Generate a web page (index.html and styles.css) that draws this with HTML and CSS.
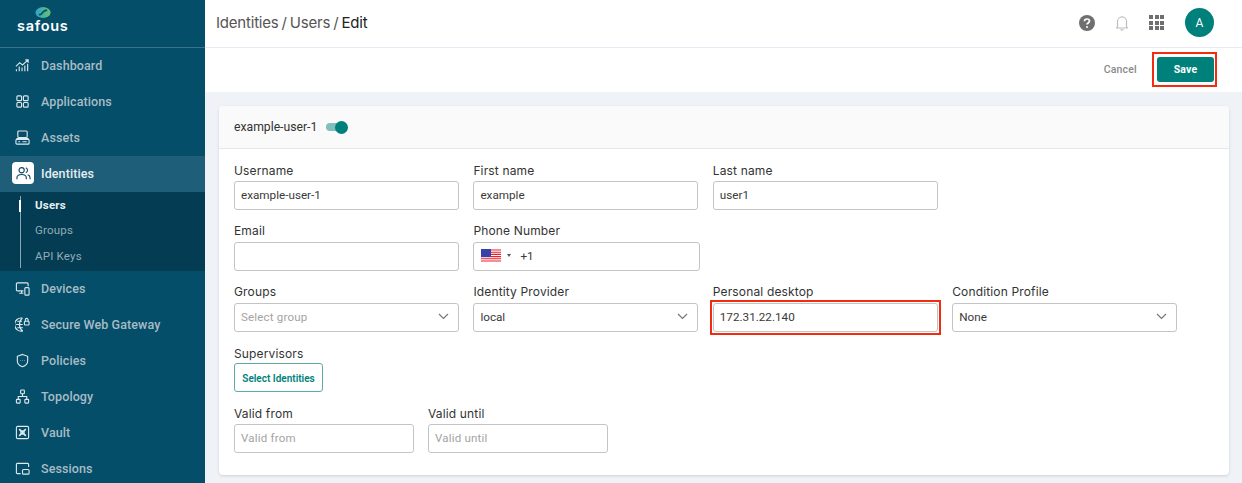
FILE: index.html
```html
<!DOCTYPE html>
<html lang="en">
<head>
  <meta charset="UTF-8" />
  <meta name="viewport" content="width=device-width, initial-scale=1" />
  <title>Identities / Users / Edit</title>
  <link rel="stylesheet" href="styles.css">
</head>
<body>
  <aside class="sidebar">
    <div class="logo">
      <svg class="logo-mark" width="16" height="11" viewBox="0 0 16 11">
        <defs>
          <linearGradient id="logoGrad" x1="0" y1="0" x2="1" y2="0">
            <stop offset="0" stop-color="#2aa3c8" />
            <stop offset="1" stop-color="#6cc070" />
          </linearGradient>
        </defs>
        <ellipse cx="8" cy="5.500" rx="7.600" ry="5.400" fill="url(#logoGrad)" />
        <path d="M4.500 7.600 C7 8 7 5.500 8 5 C9 4.500 9.500 3.200 11.500 3.400" fill="none" stroke="#04506b" stroke-width="1.600" stroke-linecap="round" />
      </svg>
      <span class="logo-text">safous</span>
    </div>
    <nav class="nav">
      <a class="nav-item">
        <svg class="nav-icon" viewBox="0 0 16 14"><path d="M1 8l4-4 3 2.500 6-5.500M11 1h3v3M1.500 13v-2M4.500 13V8M7.500 13V9M10.500 13V7M13.500 13V5" /></svg>
        <span>Dashboard</span>
      </a>
      <a class="nav-item">
        <svg class="nav-icon" viewBox="0 0 16 16"><rect x="2" y="2" width="5" height="5" rx="1" /><rect x="9" y="2" width="5" height="5" rx="1" /><rect x="2" y="9" width="5" height="5" rx="1" /><rect x="9" y="9" width="5" height="5" rx="1" /></svg>
        <span>Applications</span>
      </a>
      <a class="nav-item">
        <svg class="nav-icon" viewBox="0 0 16 16"><rect x="3" y="1" width="10" height="7" rx="1" /><rect x="1" y="10" width="14" height="5" rx="1" /><path d="M3.500 12.500h2M8 12.500h4.500M1.500 9h13" /></svg>
        <span>Assets</span>
      </a>
      <a class="nav-item active">
        <span class="icon-tile">
          <svg class="nav-icon" viewBox="0 0 16 16"><circle cx="6" cy="4.500" r="2.800" /><path d="M1 14v-1.500c0-2.200 2-3.500 5-3.500s5 1.300 5 3.500V14M10.500 1.900a2.800 2.800 0 0 1 0 5.200M12.500 9.300c1.500.5 2.500 1.600 2.500 3.200V14" /></svg>
        </span>
        <span>Identities</span>
      </a>
      <div class="subnav">
        <a class="sub-item current">Users</a>
        <a class="sub-item">Groups</a>
        <a class="sub-item">API Keys</a>
      </div>
      <a class="nav-item">
        <svg class="nav-icon" viewBox="0 0 16 16"><path d="M9 10.500H2.500a1 1 0 0 1-1-1V3a1 1 0 0 1 1-1H13a1 1 0 0 1 1 1v2.500M4.500 13H9M7 10.500V13" /><rect x="10.500" y="7" width="4.500" height="8" rx="1" /></svg>
        <span>Devices</span>
      </a>
      <a class="nav-item">
        <svg class="nav-icon" viewBox="0 0 16 16"><path d="M8.500 14.800A7 7 0 1 1 8 1.200M1.200 8h7M2.500 4.500h5M2.500 11.500h6M8 1.200C5.500 3 4.800 5.500 4.800 8s.7 5 3.200 6.800" /><rect x="10" y="4.500" width="5" height="4" rx="1" /><path d="M11 4.500V3a1.500 1.500 0 0 1 3 0v1.500" /></svg>
        <span>Secure Web Gateway</span>
      </a>
      <a class="nav-item">
        <svg class="nav-icon" viewBox="0 0 16 16"><path d="M8 1.500l5.500 2v5c0 3-2.500 5.200-5.500 6.200-3-1-5.500-3.200-5.500-6.200v-5z" /><path d="M5.800 8h.4M7.800 8h.4M9.800 8h.4" /></svg>
        <span>Policies</span>
      </a>
      <a class="nav-item">
        <svg class="nav-icon" viewBox="0 0 16 16"><rect x="6" y="1" width="4" height="4" rx=".8" /><rect x="1.500" y="11" width="4" height="4" rx=".8" /><rect x="10.500" y="11" width="4" height="4" rx=".8" /><path d="M8 5v3M3.500 11V8h9v3" /></svg>
        <span>Topology</span>
      </a>
      <a class="nav-item">
        <svg class="nav-icon" viewBox="0 0 16 16"><rect x="1.500" y="1.500" width="13" height="13" rx="1.500" /><path d="M4.500 4.500l7 7M11.500 4.500l-7 7" stroke-width="1.800" /><circle cx="8" cy="8" r="1.800" /></svg>
        <span>Vault</span>
      </a>
      <a class="nav-item">
        <svg class="nav-icon" viewBox="0 0 16 16"><path d="M6 13.500H2.500a1 1 0 0 1-1-1v-9a1 1 0 0 1 1-1h11a1 1 0 0 1 1 1v3" /><rect x="8" y="9" width="7" height="5" rx="1" /></svg>
        <span>Sessions</span>
      </a>
    </nav>
  </aside>

  <main class="main">
    <header class="topbar">
      <div class="crumbs">Identities / Users / <strong>Edit</strong></div>
      <div class="top-actions">
        <svg class="top-help" width="16" height="16" viewBox="0 0 16 16">
          <circle cx="8" cy="8" r="8" fill="#6f6f6f" />
          <path d="M5.500 6.200C5.500 4.700 6.600 4 8 4s2.500.8 2.500 2.100c0 1.900-2.500 1.800-2.500 3.500" fill="none" stroke="#fff" stroke-width="1.700" />
          <circle cx="8" cy="12" r="1" fill="#fff" />
        </svg>
        <svg class="top-bell" width="12" height="16" viewBox="0 0 12 16">
          <path d="M1.500 12V6.500a4.500 4.500 0 0 1 9 0V12l1 1H.5zM6 1v1M4.500 14.800h3" fill="none" stroke="#bdbdbd" stroke-width="1.200" />
        </svg>
        <div class="top-grid">
          <i></i><i></i><i></i><i></i><i></i><i></i><i></i><i></i><i></i>
        </div>
        <div class="avatar">A</div>
      </div>
    </header>

    <div class="actionbar">
      <button class="btn-cancel">Cancel</button>
      <button class="btn-save">Save</button>
    </div>

    <div class="content">
      <section class="card">
        <div class="card-head">
          <span>example-user-1</span>
          <span class="toggle"><span class="toggle-knob"></span></span>
        </div>
        <div class="card-body">
          <div class="form-row row-first">
            <div class="field">
              <label>Username</label>
              <div class="input">example-user-1</div>
            </div>
            <div class="field">
              <label>First name</label>
              <div class="input">example</div>
            </div>
            <div class="field">
              <label>Last name</label>
              <div class="input">user1</div>
            </div>
          </div>

          <div class="form-row">
            <div class="field">
              <label>Email</label>
              <div class="input"></div>
            </div>
            <div class="field field-phone">
              <label>Phone Number</label>
              <div class="input">
                <svg class="flag" width="20" height="14" viewBox="0 0 20 14">
                  <rect width="20" height="14" fill="#fff" />
                  <path d="M0 1h20M0 3.200h20M0 5.400h20M0 7.600h20M0 9.800h20M0 12h20" stroke="#e8202c" stroke-width="1.100" />
                  <rect width="10" height="8" fill="#3b3fa8" />
                </svg>
                <span class="flag-caret"></span>
                <span>+1</span>
              </div>
            </div>
          </div>

          <div class="form-row">
            <div class="field">
              <label>Groups</label>
              <div class="input select placeholder">Select group
                <svg class="chevron" width="11" height="7" viewBox="0 0 11 7"><path d="M1 1l4.500 4.500L10 1" /></svg>
              </div>
            </div>
            <div class="field">
              <label>Identity Provider</label>
              <div class="input select">local
                <svg class="chevron" width="11" height="7" viewBox="0 0 11 7"><path d="M1 1l4.500 4.500L10 1" /></svg>
              </div>
            </div>
            <div class="field">
              <label>Personal desktop</label>
              <div class="input marked">172.31.22.140</div>
            </div>
            <div class="field">
              <label>Condition Profile</label>
              <div class="input select">None
                <svg class="chevron" width="11" height="7" viewBox="0 0 11 7"><path d="M1 1l4.500 4.500L10 1" /></svg>
              </div>
            </div>
          </div>

          <div class="supervisors">
            <label>Supervisors</label>
            <button class="btn-outline">Select Identities</button>
          </div>

          <div class="form-row row-dates">
            <div class="field">
              <label>Valid from</label>
              <div class="input placeholder">Valid from</div>
            </div>
            <div class="field">
              <label>Valid until</label>
              <div class="input placeholder">Valid until</div>
            </div>
          </div>
        </div>
      </section>
    </div>
  </main>
</body>
</html>
```

FILE: styles.css
```css
* {
  margin: 0;
  padding: 0;
  box-sizing: border-box;
}
body {
  width: 1242px;
  height: 483px;
  overflow: hidden;
  display: flex;
  font-family: Inter, "Liberation Sans", sans-serif;
  color: #333;
  background: #eff3f8;
}

/* Sidebar */
.sidebar {
  width: 205px;
  height: 483px;
  flex: none;
  overflow: hidden;
  background: #044e69;
  font-family: Roboto, "Liberation Sans", sans-serif;
}
.logo {
  height: 48px;
  padding: 7px 0 0 17px;
  border-bottom: 1px solid #3a7389;
  display: flex;
  flex-direction: column;
  align-items: flex-start;
}
.logo-mark {
  margin-left: 18px;
}
.logo-text {
  font-family: Inter, sans-serif;
  font-size: 14.5px;
  font-weight: 600;
  line-height: 15px;
  letter-spacing: 0.7px;
  color: #fff;
}
.nav-item {
  height: 36px;
  padding: 0 0 2px 15px;
  display: flex;
  align-items: center;
  gap: 11px;
  font-size: 12.5px;
  font-weight: 500;
  letter-spacing: 0.1px;
  color: #a9bcc5;
}
.nav-icon {
  width: 15px;
  height: 15px;
  flex: none;
  fill: none;
  stroke: #dfe8ec;
  stroke-width: 1.2;
}
.nav-item.active {
  padding-left: 12px;
  gap: 7px;
  background: #1f5e78;
  color: #e6eef1;
}
.icon-tile {
  width: 22px;
  height: 22px;
  border-radius: 4px;
  background: #fff;
  display: flex;
  align-items: center;
  justify-content: center;
}
.icon-tile .nav-icon {
  stroke: #0d4a60;
}
.subnav {
  height: 79px;
  padding: 1px 0 0 35px;
  background: #033c53;
  position: relative;
}
.subnav::before {
  content: "";
  position: absolute;
  left: 20px;
  top: 4px;
  bottom: 3px;
  width: 1px;
  background: #8aa6b2;
}
.sub-item {
  display: block;
  height: 25.5px;
  line-height: 24px;
  font-size: 11.5px;
  letter-spacing: 0.2px;
  color: #93abb6;
}
.sub-item.current {
  height: 25px;
  font-weight: 700;
  color: #e6eef1;
  position: relative;
}
.sub-item.current::before {
  content: "";
  position: absolute;
  left: -16px;
  top: 7px;
  width: 2px;
  height: 12px;
  background: #fff;
}

/* Main */
.main {
  flex: 1;
  min-width: 0;
  display: flex;
  flex-direction: column;
}
.topbar {
  height: 48px;
  flex: none;
  background: #fff;
  border-bottom: 1px solid #e8e9f2;
  display: flex;
  align-items: center;
  justify-content: space-between;
  padding: 0 28px 2px 11px;
}
.crumbs {
  font-size: 15px;
  letter-spacing: -0.2px;
  word-spacing: -1px;
  color: #555;
}
.crumbs strong {
  font-weight: 400;
  color: #222;
}
.top-actions {
  display: flex;
  align-items: center;
}
.top-help,
.top-bell {
  margin-right: 21px;
}
.top-grid {
  display: grid;
  grid-template-columns: repeat(3, 4px);
  grid-auto-rows: 4px;
  gap: 1.5px;
  margin-right: 21px;
}
.top-grid i {
  background: #6f6f6f;
}
.avatar {
  width: 29px;
  height: 29px;
  border-radius: 50%;
  background: #00807a;
  color: #fff;
  font-family: Roboto, sans-serif;
  font-size: 12px;
  display: flex;
  align-items: center;
  justify-content: center;
}
.actionbar {
  height: 44px;
  flex: none;
  background: #fff;
  display: flex;
  align-items: center;
  justify-content: flex-end;
  padding: 0 28px 1px 0;
  gap: 20px;
}
.btn-cancel {
  border: none;
  background: none;
  font-family: Roboto, sans-serif;
  font-size: 10.5px;
  font-weight: 500;
  letter-spacing: 0.2px;
  color: #8a8a8a;
}
.btn-save {
  width: 57px;
  height: 25px;
  border: none;
  border-radius: 3px;
  background: #00807a;
  color: #fff;
  font-family: Roboto, sans-serif;
  font-size: 10.5px;
  font-weight: 700;
  letter-spacing: 0.2px;
  position: relative;
}
/* Red annotation frames */
.btn-save::after,
.marked::after {
  content: "";
  position: absolute;
  border: 2px solid #f22c10;
}
.btn-save::after {
  inset: -5px -3px -5px -5px;
}
.marked {
  position: relative;
}
.marked::after {
  inset: -4px;
}

/* Card */
.content {
  flex: 1;
  padding: 14px 13px 0 14px;
}
.card {
  height: 369px;
  background: #fff;
  border-radius: 4px;
  box-shadow: 0 1px 3px rgba(0, 0, 0, 0.14);
  overflow: hidden;
}
.card-head {
  height: 43px;
  padding: 0 15px;
  background: #fafafa;
  border-bottom: 1px solid #e2eaee;
  display: flex;
  align-items: center;
  gap: 9px;
  font-family: Roboto, sans-serif;
  font-size: 12.2px;
}
.toggle {
  width: 21px;
  height: 8px;
  border-radius: 4px;
  background: #7fbfbc;
  position: relative;
}
.toggle-knob {
  position: absolute;
  right: -1px;
  top: -2.5px;
  width: 13px;
  height: 13px;
  border-radius: 50%;
  background: #00807a;
}
.card-body {
  padding: 13px 15px 0;
}
.form-row {
  display: flex;
  gap: 14.4px;
  margin-bottom: 12px;
}
.field {
  width: 225px;
}
.field-phone {
  width: 227px;
}
.field label,
.supervisors label {
  display: block;
  height: 20px;
  font-size: 12px;
  line-height: 17px;
  letter-spacing: 0.15px;
  color: #333;
}
.row-first .field label {
  height: 19px;
}
.supervisors label {
  height: 19px;
  line-height: 19px;
}
.row-dates .field label {
  line-height: 19px;
}
.input {
  height: 29px;
  padding: 0 6px 2px;
  border: 1px solid #c4c4c4;
  border-radius: 3px;
  background: #fff;
  display: flex;
  align-items: center;
  font-family: Roboto, sans-serif;
  font-size: 11.7px;
  color: #3a3a3a;
}
.placeholder {
  font-size: 11.5px;
  letter-spacing: 0.2px;
  color: #a3a3a3;
}
.select {
  justify-content: space-between;
  padding-right: 9px;
}
.chevron {
  fill: none;
  stroke: #777;
  stroke-width: 1.2;
}
.flag {
  margin-left: 1px;
}
.flag-caret {
  width: 0;
  height: 0;
  margin: 0 9px 0 6px;
  border-left: 2px solid transparent;
  border-right: 2px solid transparent;
  border-top: 3px solid #555;
}
.supervisors {
  margin-bottom: 12px;
}
.btn-outline {
  display: block;
  width: 89px;
  height: 29px;
  padding-top: 1px;
  border: 1px solid #5fa9a6;
  border-radius: 3px;
  background: #fff;
  color: #00807a;
  font-family: Roboto, sans-serif;
  font-size: 10px;
  font-weight: 600;
}
.row-dates {
  gap: 14px;
}
.row-dates .field {
  width: 180px;
}
```
